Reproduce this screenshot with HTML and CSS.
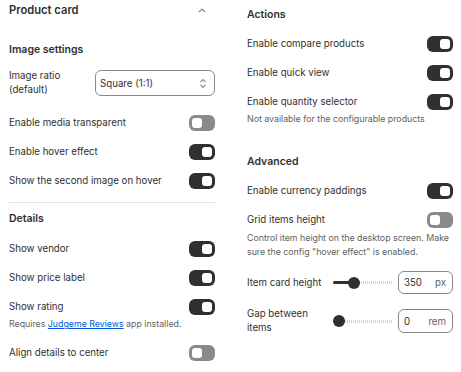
FILE: index.html
```html
<!DOCTYPE html>
<html>
<head>
<meta charset="utf-8">
<link rel="stylesheet" href="styles.css">
</head>
<body>
<div class="page">
  <div class="col">
    <div class="panel-head">
      <span class="title">Product card</span>
      <svg class="chev" width="10" height="6" viewBox="0 0 10 6"><polyline points="2,5 5,2 8,5" fill="none" stroke="#8a8a8a" stroke-width="1.2"/></svg>
    </div>
    <div class="heading h-image">Image settings</div>
    <div class="select-row">
      <div class="label two">Image ratio<br>(default)</div>
      <div class="select">
        <span>Square (1:1)</span>
        <svg width="8" height="11" viewBox="0 0 8 11"><polyline points="1.5,4 4,1.5 6.5,4" fill="none" stroke="#8a8a8a" stroke-width="1.1"/><polyline points="1.5,7 4,9.5 6.5,7" fill="none" stroke="#8a8a8a" stroke-width="1.1"/></svg>
      </div>
    </div>
    <div class="rows r1">
      <div class="row"><span class="label">Enable media transparent</span><span class="toggle off"></span></div>
      <div class="row"><span class="label">Enable hover effect</span><span class="toggle on"></span></div>
      <div class="row"><span class="label">Show the second image on hover</span><span class="toggle on"></span></div>
    </div>
    <div class="divider"></div>
    <div class="heading h-details">Details</div>
    <div class="rows r2">
      <div class="row"><span class="label">Show vendor</span><span class="toggle on"></span></div>
      <div class="row"><span class="label">Show price label</span><span class="toggle on"></span></div>
      <div class="row"><span class="label">Show rating</span><span class="toggle on"></span></div>
    </div>
    <div class="help h-rating">Requires <a class="link">Judgeme Reviews</a> app installed.</div>
    <div class="row r-align"><span class="label">Align details to center</span><span class="toggle off"></span></div>
  </div>
  <div class="col">
    <div class="heading h-actions">Actions</div>
    <div class="rows r3">
      <div class="row"><span class="label">Enable compare products</span><span class="toggle on"></span></div>
      <div class="row"><span class="label">Enable quick view</span><span class="toggle on"></span></div>
      <div class="row"><span class="label">Enable quantity selector</span><span class="toggle on"></span></div>
    </div>
    <div class="help h-qty">Not available for the configurable products</div>
    <div class="heading h-adv">Advanced</div>
    <div class="rows r4">
      <div class="row"><span class="label">Enable currency paddings</span><span class="toggle on"></span></div>
      <div class="row"><span class="label">Grid items height</span><span class="toggle off"></span></div>
    </div>
    <div class="help h-grid">Control item height on the desktop screen. Make sure the config "hover effect" is enabled.</div>
    <div class="range-row rr1">
      <span class="label">Item card height</span>
      <div class="slider"><span class="fill" style="width:21px"></span><span class="thumb" style="left:21px"></span></div>
      <div class="num"><span class="val">350</span><span class="unit">px</span></div>
    </div>
    <div class="range-row rr2">
      <span class="label two">Gap between<br>items</span>
      <div class="slider"><span class="fill" style="width:0px"></span><span class="thumb" style="left:6px"></span></div>
      <div class="num tall"><span class="val">0</span><span class="unit">rem</span></div>
    </div>
  </div>
</div>
</body>
</html>
```

FILE: styles.css
```css
* { box-sizing: border-box; }
html, body { margin: 0; padding: 0; background: #fff; }
body {
  font-family: Inter, "Noto Sans", sans-serif;
  color: #303030;
  font-size: 9.7px;
  width: 461px;
  height: 372px;
  overflow: hidden;
}
.page {
  display: grid;
  grid-template-columns: 206px 206px;
  column-gap: 32px;
  padding: 0 8px 0 9px;
}
.col { display: flex; flex-direction: column; }
.panel-head {
  height: 20px;
  display: flex;
  align-items: center;
  justify-content: space-between;
  padding-right: 8px;
}
.title { font-size: 11.2px; font-weight: 600; }
.heading { font-size: 10.5px; font-weight: 600; height: 16px; line-height: 16px; }
.h-image { margin-top: 22px; }
.select-row {
  margin-top: 12px;
  height: 26px;
  display: flex;
  align-items: center;
  justify-content: space-between;
}
.label { font-size: 9.7px; line-height: 14px; }
.select {
  width: 120px;
  height: 26px;
  border: 1px solid #8a8a8a;
  border-radius: 6px;
  display: flex;
  align-items: center;
  justify-content: space-between;
  padding: 0 7px 0 4px;
  font-size: 9.7px;
}
.rows { display: flex; flex-direction: column; }
.row {
  height: 29px;
  display: flex;
  align-items: center;
  justify-content: space-between;
}
.r1 { margin-top: 12px; }
.toggle {
  width: 26px;
  height: 16px;
  border-radius: 6px;
  position: relative;
  flex: none;
}
.toggle::after {
  content: "";
  position: absolute;
  top: 3px;
  width: 10px;
  height: 10px;
  border-radius: 3px;
  background: #fff;
}
.toggle.on { background: #303030; }
.toggle.on::after { right: 3px; }
.toggle.off { background: #8a8a8a; }
.toggle.off::after { left: 3px; }
.divider { margin-top: 7px; height: 1px; background: #e3e3e3; }
.h-details { margin-top: 8px; }
.r2 { margin-top: 7px; }
.help { font-size: 8.8px; line-height: 14px; color: #616161; }
.link { color: #005bd3; text-decoration: underline; }
.h-rating { margin-top: -4px; }
.r-align { margin-top: 7px; }

.h-actions { margin-top: 7px; }
.r3 { margin-top: 6px; }
.h-qty { margin-top: -4px; }
.h-adv { margin-top: 28px; }
.r4 { margin-top: 6px; }
.h-grid { margin-top: -3px; }
.range-row {
  display: flex;
  align-items: center;
}
.rr1 { margin-top: 12px; height: 23px; }
.rr2 { margin-top: 15px; height: 24px; }
.range-row .label { width: 86px; flex: none; }
.slider {
  position: relative;
  width: 59px;
  height: 12px;
  margin-right: 6px;
  flex: none;
  background: repeating-linear-gradient(90deg, #d4d4d4 0 1px, transparent 1px 2px) left center / 100% 3px no-repeat;
}
.slider .fill {
  position: absolute;
  left: 0;
  top: 4.5px;
  height: 3px;
  background: #303030;
  border-radius: 2px;
}
.slider .thumb {
  position: absolute;
  top: 0;
  width: 12px;
  height: 12px;
  margin-left: -6px;
  border-radius: 50%;
  background: #303030;
}
.num {
  width: 55px;
  height: 23px;
  border: 1px solid #8a8a8a;
  border-radius: 6px;
  display: flex;
  align-items: center;
  justify-content: space-between;
  padding: 0 6px 0 5px;
  font-size: 9.7px;
}
.num.tall { height: 24px; }
.unit { color: #616161; }
```
